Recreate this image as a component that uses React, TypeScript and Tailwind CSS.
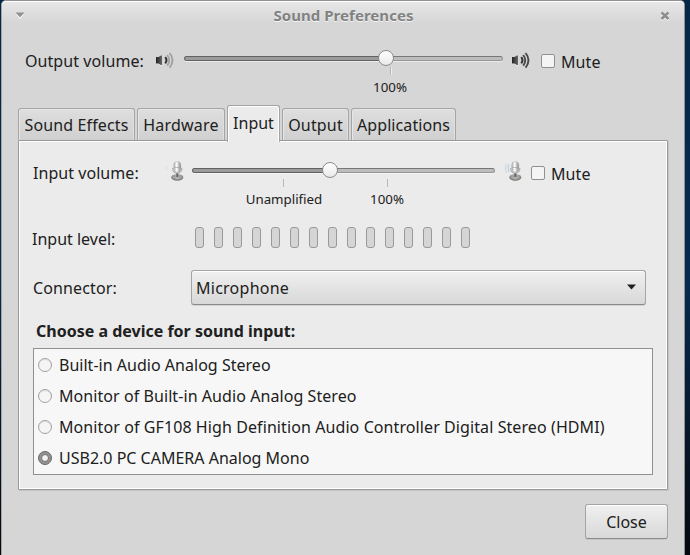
import React from "react";

function Speaker({ loud }: { loud?: boolean }) {
  const outer = loud ? "#484848" : "#a2a2a2";
  return (
    <svg width="20" height="18" viewBox="0 0 20 18" className="block shrink-0" fill="none">
      <defs>
        <linearGradient id="cone" x1="0" x2="1" y1="0" y2="0">
          <stop offset="0" stopColor="#222" />
          <stop offset="1" stopColor="#686868" />
        </linearGradient>
      </defs>
      <path d="M1 7H3.5L6 5H7V15H6L3.5 13H1Z" fill="#fff" opacity=".5" />
      <path d="M1 6H3.5L6 4.5H7V14H6L3.5 12.5H1Z" fill="url(#cone)" />
      <path d="M10.2 6.2Q12.8 9.3 10.2 12.4" stroke="#333" strokeWidth="2" />
      <path d="M12.2 4Q16.4 9.3 12.2 14.6" stroke={outer} strokeWidth="1.9" />
      <path d="M14.6 2Q20.4 9.3 14.6 16.6" stroke={outer} strokeWidth="1.9" />
    </svg>
  );
}

function Mic({ loud }: { loud?: boolean }) {
  return (
    <svg width="20" height="20" viewBox="0 0 20 20" className="block shrink-0" fill="none">
      <defs>
        <linearGradient id="mic" x1="0" x2="1" y1="0" y2="0">
          <stop offset="0" stopColor="#aaa" />
          <stop offset=".4" stopColor="#fff" />
          <stop offset="1" stopColor="#858585" />
        </linearGradient>
        <linearGradient id="base" x1="0" x2="1" y1="0" y2="0">
          <stop offset="0" stopColor="#8d8f8c" />
          <stop offset=".5" stopColor="#b5b7b3" />
          <stop offset="1" stopColor="#8d8f8c" />
        </linearGradient>
      </defs>
      {loud ? (
        <>
          <path d="M5.8 3.5Q4.4 7 5.8 11" stroke="#b4c9dd" />
          <path d="M3.3 2.5Q1.4 7 3.3 12" stroke="#c6d6e4" />
        </>
      ) : (
        <path d="M1.5 5V9" stroke="#cfdfeb" />
      )}
      <ellipse cx="12.3" cy="16.6" rx="6" ry="3.2" fill="#777975" />
      <ellipse cx="12.3" cy="15.8" rx="5.7" ry="2.6" fill="url(#base)" />
      <path d="M12.3 12V16" stroke="#666" strokeWidth="2" />
      <path d="M7.8 7V8Q7.8 12 12.3 12Q16.8 12 16.8 8V7" stroke="#a3a5a2" />
      <rect x="8.8" y=".5" width="7" height="10.8" rx="3.5" fill="url(#mic)" stroke="#a4a4a4" strokeWidth=".5" />
      <path d="M9.3 6.5H15.3" stroke="#999" strokeWidth=".6" />
    </svg>
  );
}

function Track({ width, fill }: { width: number; fill: number }) {
  return (
    <div className="relative h-4 shrink-0 pt-[6px]" style={{ width }}>
      <div className="h-[5px] rounded-full border border-[#969696] border-t-[#777] bg-[#bdbdbd] shadow-[0_1px_0_rgba(255,255,255,.5)]">
        <div className="-mt-px -ml-px h-[5px] rounded-l-full border border-[#626262] bg-[#9b9b9b]" style={{ width: fill }} />
      </div>
      <div
        className="absolute top-0 size-4 rounded-full border border-[#8b8b8b] bg-linear-to-b from-white to-[#e9e9e9]"
        style={{ left: fill - 8 }}
      />
    </div>
  );
}

function Mark({ label, className, labelClass = "" }: { label: string; className: string; labelClass?: string }) {
  return (
    <div className={`flex flex-col items-center ${className}`}>
      <div className="h-2 w-[2px] border-l border-[#b5b5b5] bg-[#eee]" />
      <span className={`mt-[3px] text-[13.3px] leading-[18px] ${labelClass}`}>{label}</span>
    </div>
  );
}

function Mute({ className }: { className: string }) {
  return (
    <label className="flex">
      <span className="mt-[3px] mr-[6px] size-[14px] rounded-[2px] border border-[#909090] bg-[#f4f4f4]" />
      <span className={className}>Mute</span>
    </label>
  );
}

function Tab({ label, className, active }: { label: string; className: string; active?: boolean }) {
  return (
    <div
      className={
        active
          ? `relative z-10 -mb-[2px] flex h-[37px] justify-center rounded-t-[3px] border border-b-0 border-[#a3a3a3] bg-[#ebebeb] pt-[6px] shadow-[inset_1px_1px_0_#fff,inset_-1px_0_0_#fff] ${className}`
          : `flex h-8 justify-center rounded-t-[3px] border border-b-0 border-[#a5a5a5] bg-linear-to-b from-[#dedede] to-[#d0d0d0] pt-[5px] shadow-[inset_1px_1px_0_#e6e6e6,inset_-1px_0_0_#e0e0e0] ${className}`
      }
    >
      {label}
    </div>
  );
}

const devices = [
  { name: "Built-in Audio Analog Stereo", tracking: "tracking-[0.02px]" },
  { name: "Monitor of Built-in Audio Analog Stereo", tracking: "tracking-[0.07px]" },
  {
    name: "Monitor of GF108 High Definition Audio Controller Digital Stereo (HDMI)",
    tracking: "tracking-[0.09px]",
  },
  { name: "USB2.0 PC CAMERA Analog Mono", tracking: "tracking-normal" },
];

export default function App() {
  return (
    <div className="flex h-[555px] w-[690px] overflow-hidden bg-linear-to-b from-[#052747] via-[#052b50] to-[#050910] pr-[5px] pl-px font-['Noto_Sans',sans-serif] text-[16px] leading-[22px] whitespace-nowrap text-[#202020]">
      <div className="w-[684px] rounded-t-[5px] border-x border-t border-[#929292] border-l-[#a5a5a5] bg-[#d6d6d6]">
        <header className="flex h-[29px] items-start rounded-t-[4px] border-t border-white bg-linear-to-b from-[#e7e7e7] to-[#d6d6d6] to-75% pt-1">
          <svg width="10" height="7" viewBox="0 0 10 7" className="mt-[6px] ml-[13px]">
            <path d="M1 1H9L5 6Z" fill="#fff" transform="translate(0 1)" />
            <path d="M.5 .5H9.5L5 5.5Z" fill="#929292" />
          </svg>
          <h1 className="-mt-px flex-1 pl-[2px] text-center text-[15px] leading-5 font-bold tracking-[0.04px] text-[#828282] [text-shadow:0_1px_0_#f4f4f4]">Sound Preferences</h1>
          <svg width="10" height="10" viewBox="0 0 10 10" className="mt-[5px] mr-[14px]" fill="none">
            <path d="M1.5 2.5L8.5 9M8.5 2.5L1.5 9" stroke="#fff" strokeWidth="2.2" />
            <path d="M1.5 1.5L8.5 8M8.5 1.5L1.5 8" stroke="#8d8d8d" strokeWidth="2.4" />
          </svg>
        </header>

        <section className="flex h-[75px] pl-[23px]">
          <span className="mt-5 w-[130px] tracking-[0.07px]">Output volume:</span>
          <div className="mt-[21px] w-[29px]"><Speaker /></div>
          <div className="mt-5 w-[327px]">
            <Track width={319} fill={202} />
            <Mark label="100%" className="mt-px ml-[187px] w-10" labelClass="-ml-[2px]" />
          </div>
          <div className="mt-[21px] w-[30px]"><Speaker loud /></div>
          <div className="mt-[21px]"><Mute className="tracking-[0.1px]" /></div>
        </section>

        <nav className="flex h-[35px] items-end gap-[2px] pl-4">
          <Tab label="Sound Effects" className="w-[117px] tracking-[0.13px]" />
          <Tab label="Hardware" className="w-[88px] tracking-[0.2px]" />
          <Tab label="Input" className="w-[53px]" active />
          <Tab label="Output" className="w-[67px] tracking-[0.16px]" />
          <Tab label="Applications" className="w-[105px] tracking-[0.1px]" />
        </nav>

        <main className="ml-4 h-[350px] w-[650px] rounded-[1px] border border-[#989898] bg-[#ebebeb] px-[14px] shadow-[inset_1px_1px_0_#fff,inset_-1px_-1px_0_#fff,1px_1px_0_#c4c4c4]">
          <div className="flex h-[77px]">
            <span className="mt-[21px] w-[132px] tracking-[0.05px]">Input volume:</span>
            <div className="mt-5 w-[27px]"><Mic /></div>
            <div className="mt-[21px] w-[310px]">
              <Track width={303} fill={138} />
              <div className="flex pt-px">
                <Mark label="Unamplified" className="ml-[52px] w-20" />
                <Mark label="100%" className="ml-[44px] w-10" labelClass="-ml-[2px]" />
              </div>
            </div>
            <div className="mt-5 w-[29px] pl-px"><Mic loud /></div>
            <div className="mt-[22px]"><Mute className="tracking-[0.1px]" /></div>
          </div>

          <div className="flex h-[52px]">
            <span className="-ml-px mt-[10px] w-[162px]">Input level:</span>
            <div className="mt-[9px] ml-px flex gap-[10px]">
              {Array.from({ length: 15 }, (_, i) => (
                <span key={i} className="h-[21px] w-[9px] rounded-[3px] border border-[#999] bg-[#d5d5d5]" />
              ))}
            </div>
          </div>

          <div className="flex h-[49px]">
            <span className="mt-[7px] w-[158px] tracking-[0.12px]">Connector:</span>
            <button className="flex h-[35px] w-[455px] justify-between rounded-[3px] border border-[#a4a4a4] border-b-[#898989] bg-linear-to-b from-[#f0f0f0] to-[#d8d8d8] pt-[6px] pr-[9px] pl-1 shadow-[inset_0_1px_0_#fff,0_1px_0_#d2d2d2]">
              <span className="tracking-[0.25px]">Microphone</span>
              <svg width="9" height="6" viewBox="0 0 9 6" className="mt-[7px]">
                <path d="M0 .5H9L4.5 5.5Z" fill="#202020" />
              </svg>
            </button>
          </div>

          <h2 className="h-[29px] pl-[3px] leading-[24px] font-bold">Choose a device for sound input:</h2>
          <div className="h-[127px] w-[620px] border border-[#909090] bg-[#f7f7f7]">
            {devices.map((device, i) => (
              <label key={device.name} className="flex h-[31px] items-center pl-1">
                <span
                  className={
                    i === 3
                      ? "mr-[7px] flex size-[14px] items-center justify-center rounded-full border border-[#696969] bg-[#929292]"
                      : "mr-[7px] flex size-[14px] items-center justify-center rounded-full border border-[#a1a1a1] bg-[#f5f5f5] shadow-[inset_0_1px_0_#ddd]"
                  }
                >
                  {i === 3 && <span className="size-2 rounded-full border border-[#707070] bg-[#f2f2f2]" />}
                </span>
                <span className={device.tracking}>{device.name}</span>
              </label>
            ))}
          </div>
        </main>

        <footer className="flex h-[64px] justify-end pt-[14px] pr-4">
          <button className="h-[35px] w-[83px] rounded-[3px] border border-[#a4a4a4] border-b-[#8b8b8b] bg-linear-to-b from-[#f0f0f0] to-[#d8d8d8] shadow-[inset_0_1px_0_#fff,0_1px_0_#c5c5c5]">Close</button>
        </footer>
      </div>
    </div>
  );
}
